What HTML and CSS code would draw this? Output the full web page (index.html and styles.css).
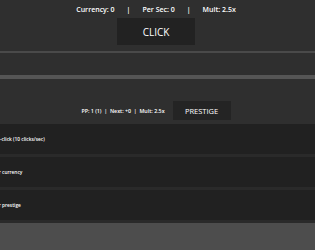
FILE: index.html
```html
<!DOCTYPE html>
<html lang="en">
<head>
  <meta charset="UTF-8" />
  <meta name="viewport" content="width=device-width, initial-scale=1.0"/>
  <title>Clicker</title>
  <link rel="stylesheet" href="styles.css">
</head>
<body>

  <div class="top">
    <div class="stats">
      <span>Currency: 0</span>
      <span class="sep">|</span>
      <span>Per Sec: 0</span>
      <span class="sep">|</span>
      <span>Mult: 2.5x</span>
    </div>
    <button class="click-btn">CLICK</button>
  </div>

  <div class="spacer"></div>

  <div class="prestige">
    <span class="pp-info">PP: 1 (1) &nbsp;|&nbsp; Next: +0 &nbsp;|&nbsp; Mult: 2.5x</span>
    <button class="prestige-btn">PRESTIGE</button>
  </div>

  <div class="upgrades">
    <div class="upgrade"><span class="desc">Auto-click (10 clicks/sec)</span></div>
    <div class="upgrade"><span class="desc desc-long">Mult per currency</span></div>
    <div class="upgrade"><span class="desc desc-long">Mult per prestige</span></div>
  </div>

  <div class="footer"></div>

</body>
</html>
```

FILE: styles.css
```css
body {
  margin: 0;
  padding: 0;
  font-family: 'Open Sans', sans-serif;
  background: #2f2f2f;
  color: #fff;
  overflow: hidden;
}

.top {
  display: flex;
  flex-direction: column;
  align-items: center;
  padding: 5px 3px 6px 0;
  border-bottom: 2px solid #4a4a4a;
}

.stats {
  display: flex;
  gap: 12px;
  font-size: 7px;
  font-weight: 600;
  line-height: 10px;
  margin-bottom: 3px;
}

.click-btn {
  width: 78px;
  height: 27px;
  background: #222;
  color: #fff;
  border: none;
  font-family: 'Open Sans', sans-serif;
  font-size: 10px;
  font-weight: 500;
  padding: 0;
}

.spacer {
  height: 22px;
  border-bottom: 4px solid #555;
}

.prestige {
  display: flex;
  justify-content: center;
  align-items: center;
  gap: 8px;
  padding: 22px 3px 4px 0;
}

.pp-info {
  font-size: 5.3px;
  font-weight: 600;
}

.prestige-btn {
  width: 58px;
  height: 19px;
  background: #242424;
  color: #fff;
  border: none;
  font-family: 'Open Sans', sans-serif;
  font-size: 7.5px;
  font-weight: 500;
  padding: 0;
}

.upgrades {
  display: flex;
  flex-direction: column;
}

.upgrade {
  height: 30px;
  background: #212121;
  border-bottom: 3px solid #2a2a2a;
  display: flex;
  align-items: center;
  font-size: 4.8px;
  font-weight: 600;
}

.desc {
  margin-left: -11px;
  white-space: nowrap;
}

.desc-long {
  margin-left: -19px;
}

.footer {
  height: 27px;
  background: #4d4d4d;
}
```
